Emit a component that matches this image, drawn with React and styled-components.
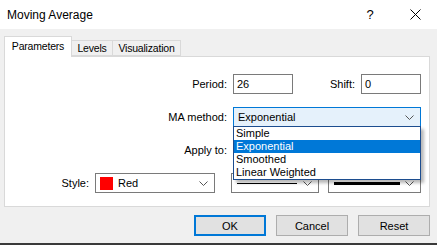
import styled, { createGlobalStyle } from "styled-components";

const Global = createGlobalStyle`
  html, body {
    margin: 0;
    padding: 0;
    overflow: hidden;
  }
  * { box-sizing: border-box; }
`;

const Window = styled.div`
  width: 437px;
  height: 245px;
  background: #f0f0f0;
  border-bottom: 2px solid #3a3a3a;
  display: flex;
  flex-direction: column;
  font-family: "Liberation Sans", Arial, sans-serif;
  font-size: 11px;
  color: #000;
`;

const TitleBar = styled.div`
  height: 29px;
  background: #fff;
  display: flex;
  align-items: center;
  padding-left: 7px;
`;

const Title = styled.div`
  font-size: 12px;
  flex: 1;
`;

const TitleBtn = styled.div`
  width: ${(p) => p.w}px;
  height: 29px;
  display: flex;
  align-items: center;
  justify-content: center;
  font-size: 13px;
`;

const Body = styled.div`
  padding: 7px 0 0 4px;
  display: flex;
  flex-direction: column;
`;

const TabStrip = styled.div`
  display: flex;
  align-items: flex-end;
  height: 20px;
  position: relative;
  z-index: 1;
`;

const Tab = styled.div`
  width: ${(p) => p.w}px;
  height: ${(p) => (p.active ? 21 : 16)}px;
  margin-bottom: ${(p) => (p.active ? -1 : 0)}px;
  margin-left: ${(p) => (p.first ? 0 : -1)}px;
  background: ${(p) => (p.active ? "#fff" : "#f0f0f0")};
  border: 1px solid #d9d9d9;
  border-bottom: ${(p) => (p.active ? "none" : "1px solid #d9d9d9")};
  display: flex;
  align-items: center;
  justify-content: center;
  padding-bottom: ${(p) => (p.active ? 2 : 0)}px;
  font-size: 10.5px;
  letter-spacing: -0.2px;
`;

const Panel = styled.div`
  width: 426px;
  height: 151px;
  background: #fff;
  border: 1px solid #d9d9d9;
  padding: 17px 8px 0 0;
  display: flex;
  flex-direction: column;
  gap: 13px;
`;

const Row = styled.div`
  display: flex;
  align-items: center;
  height: 20px;
  gap: ${(p) => p.gap || 0}px;
`;

const Lead = styled.div`
  width: 222px;
  display: flex;
  justify-content: flex-end;
  align-items: center;
  gap: 6px;
  margin-right: ${(p) => (p.tight ? 7 : 6)}px;
`;

const Label = styled.span`
  white-space: nowrap;
  margin-left: ${(p) => (p.push ? "auto" : 0)};
  margin-right: ${(p) => p.mr || 0}px;
`;

const Input = styled.div`
  width: 60px;
  height: 20px;
  border: 1px solid #7a7a7a;
  background: #fff;
  padding-left: 3px;
  display: flex;
  align-items: center;
`;

const ComboWrap = styled.div`
  position: relative;
  flex: ${(p) => (p.w ? "none" : 1)};
  width: ${(p) => (p.w ? `${p.w}px` : "auto")};
`;

const Combo = styled.div`
  height: ${(p) => p.h || 20}px;
  border: 1px solid ${(p) => (p.focus ? "#0078d7" : "#7a7a7a")};
  background: ${(p) => (p.focus ? "#e5f1fb" : "#fff")};
  display: flex;
  align-items: center;
  padding-left: 4px;
  gap: 5px;
`;

const ComboText = styled.span`
  flex: 1;
`;

const Swatch = styled.span`
  width: 13px;
  height: 13px;
  background: ${(p) => p.color};
`;

const LinePreview = styled.span`
  width: ${(p) => p.w}px;
  height: ${(p) => p.t}px;
  background: #000;
  margin-left: 1px;
  margin-right: auto;
`;

const Chevron = styled.svg`
  width: 9px;
  height: 5px;
  margin-right: 6px;
  margin-left: auto;
  flex: none;
`;

const DropList = styled.div`
  position: absolute;
  top: 100%;
  left: 0;
  right: 0;
  margin-top: -1px;
  background: #fff;
  border: 1px solid #1c4d8f;
  box-shadow: 3px 3px 3px rgba(0, 0, 0, 0.28);
  z-index: 5;
`;

const DropItem = styled.div`
  height: 13px;
  line-height: 13px;
  padding-left: 2px;
  background: ${(p) => (p.selected ? "#0078d7" : "transparent")};
  color: ${(p) => (p.selected ? "#fff" : "#000")};
`;

const ButtonRow = styled.div`
  display: flex;
  justify-content: flex-end;
  gap: 10px;
  margin-top: 8px;
  padding-right: 7px;
`;

const Button = styled.div`
  width: 72px;
  height: 21px;
  background: #e1e1e1;
  border: 1px solid ${(p) => (p.primary ? "#0078d7" : "#adadad")};
  box-shadow: ${(p) => (p.primary ? "inset 0 0 0 1px #0078d7" : "none")};
  display: flex;
  align-items: center;
  justify-content: center;
`;

const Arrow = () => (
  <Chevron viewBox="0 0 9 5">
    <path d="M0.5 0.5 L4.5 4.5 L8.5 0.5" fill="none" stroke="#555" strokeWidth="1" />
  </Chevron>
);

const methods = ["Simple", "Exponential", "Smoothed", "Linear Weighted"];

export default function App() {
  return (
    <Window>
      <Global />
      <TitleBar>
        <Title>Moving Average</Title>
        <TitleBtn w={46}>?</TitleBtn>
        <TitleBtn w={44}>
          <svg width="11" height="11" viewBox="0 0 11 11">
            <path d="M0.5 0.5 L10.5 10.5 M10.5 0.5 L0.5 10.5" stroke="#000" strokeWidth="1" />
          </svg>
        </TitleBtn>
      </TitleBar>
      <Body>
        <TabStrip>
          <Tab active first w={68}>Parameters</Tab>
          <Tab w={42}>Levels</Tab>
          <Tab w={69}>Visualization</Tab>
        </TabStrip>
        <Panel>
          <Row>
            <Lead><Label>Period:</Label></Lead>
            <Input>26</Input>
            <Label push mr={6}>Shift:</Label>
            <Input>0</Input>
          </Row>
          <Row>
            <Lead><Label>MA method:</Label></Lead>
            <ComboWrap>
              <Combo focus>
                <ComboText>Exponential</ComboText>
                <Arrow />
              </Combo>
              <DropList>
                {methods.map((m) => (
                  <DropItem key={m} selected={m === "Exponential"}>{m}</DropItem>
                ))}
              </DropList>
            </ComboWrap>
          </Row>
          <Row>
            <Lead><Label>Apply to:</Label></Lead>
            <ComboWrap>
              <Combo>
                <Arrow />
              </Combo>
            </ComboWrap>
          </Row>
          <Row gap={9}>
            <Lead tight>
              <Label>Style:</Label>
              <ComboWrap w={120}>
                <Combo>
                  <Swatch color="#f00" />
                  <ComboText>Red</ComboText>
                  <Arrow />
                </Combo>
              </ComboWrap>
            </Lead>
            <ComboWrap w={88}>
              <Combo>
                <LinePreview w={60} t={1} />
                <Arrow />
              </Combo>
            </ComboWrap>
            <ComboWrap>
              <Combo>
                <LinePreview w={66} t={3} />
                <Arrow />
              </Combo>
            </ComboWrap>
          </Row>
        </Panel>
        <ButtonRow>
          <Button primary>OK</Button>
          <Button>Cancel</Button>
          <Button>Reset</Button>
        </ButtonRow>
      </Body>
    </Window>
  );
}
